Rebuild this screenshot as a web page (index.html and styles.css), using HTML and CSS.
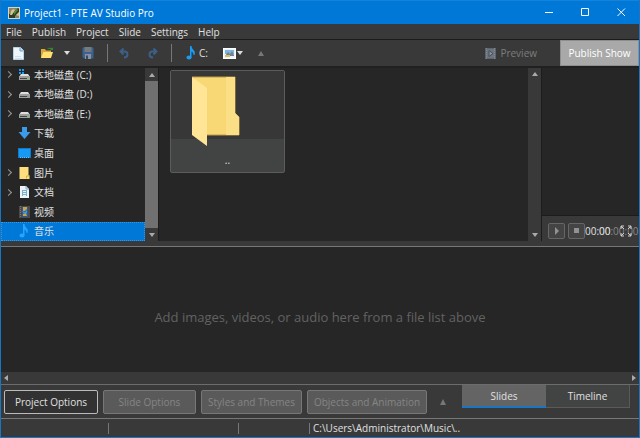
FILE: index.html
```html
<!DOCTYPE html>
<html lang="en">
  <head>
    <meta charset="UTF-8" />
    <meta name="viewport" content="width=device-width, initial-scale=1.0" />
    <title>Project1 - PTE AV Studio Pro</title>
    <link rel="stylesheet" href="styles.css">
  </head>
  <body>
    <header class="titlebar">
      <svg class="app-icon" width="12" height="12" viewBox="0 0 12 12">
        <rect width="12" height="12" fill="#d9d3c4" />
        <rect x="1" y="1" width="10" height="10" fill="#8d8569" />
        <path d="M1 11V7l4-1 5-5 1 1v3L7 9v2z" fill="#2f3d25" />
        <path d="M3 4l2-2 2 1-3 5H2zM8 8l3-3v4z" fill="#d3c38e" />
        <path d="M6 5l3-3 1 1-4 5z" fill="#4d8b37" />
      </svg>
      <span class="title">Project1 - PTE AV Studio Pro</span>
      <div class="window-buttons">
        <button type="button" aria-label="Minimize">
          <svg width="9" height="9" viewBox="0 0 9 9"><path d="M0 4.500h8" /></svg>
        </button>
        <button type="button" aria-label="Maximize">
          <svg width="9" height="9" viewBox="0 0 9 9"><path d="M.5.5h7v7h-7z" /></svg>
        </button>
        <button type="button" aria-label="Close">
          <svg width="9" height="9" viewBox="0 0 9 9"><path d="M.5.5l7.500 7.500M8 .5L.5 8" /></svg>
        </button>
      </div>
    </header>

    <nav class="menu">
      <button type="button">File</button>
      <button type="button">Publish</button>
      <button type="button">Project</button>
      <button type="button">Slide</button>
      <button type="button">Settings</button>
      <button type="button">Help</button>
    </nav>

    <div class="toolbar">
      <button type="button" class="tool tool-new" aria-label="New">
        <svg width="11" height="13" viewBox="0 0 11 13">
          <path d="M.5.500h7l3 3v9H.5z" fill="#eef6fc" stroke="#b9d3e6" />
          <path d="M7 .5v3.500h3.500" fill="#b7d8f0" stroke="#6ba5cf" />
          <path d="M2 9.500h6M2 11.500h7" stroke="#cfe0ec" />
        </svg>
      </button>
      <button type="button" class="tool tool-open" aria-label="Open">
        <svg width="14" height="12" viewBox="0 0 14 12">
          <path d="M1 11V2h4l1 1.500h5V6" fill="#d8a63a" />
          <path d="M1 11l2.500-6H13l-2 6z" fill="#ffdf72" />
          <path d="M7 2q2-2 4-1l2-.5V3h-3l1-1Q9 1.500 7 2z" fill="#2f8a2c" />
        </svg>
      </button>
      <button type="button" class="tool tool-drop" aria-label="Recent files">
        <span class="arrow arrow-down"></span>
      </button>
      <button type="button" class="tool tool-save" aria-label="Save">
        <svg width="12" height="12" viewBox="0 0 12 12">
          <path d="M.5.500h11v11H2L.5 10z" fill="#3b6291" />
          <path d="M2.500 0h7v5h-7z" fill="#747a80" />
          <path d="M3 7h6v5H3z" fill="#8c9298" />
          <path d="M4 8.500h2V12H4z" fill="#2d4d76" />
        </svg>
      </button>
      <span class="separator"></span>
      <button type="button" class="tool tool-undo" aria-label="Undo">
        <svg width="10" height="12" viewBox="0 0 10 12">
          <path d="M4.500 1.500L1.500 4.500l3 3M2 4.500h3.500Q8.500 4.500 8.500 7.500T5 10.500" fill="none" stroke="#3c5f88" stroke-width="2" />
        </svg>
      </button>
      <button type="button" class="tool tool-redo" aria-label="Redo">
        <svg width="10" height="12" viewBox="0 0 10 12">
          <path d="M5.500 1.500l3 3-3 3M8 4.500H4.500Q1.500 4.500 1.500 7.500T5 10.500" fill="none" stroke="#3c5f88" stroke-width="2" />
        </svg>
      </button>
      <span class="separator"></span>
      <button type="button" class="tool tool-drive">
        <svg width="10" height="14" viewBox="0 0 10 14">
          <ellipse cx="3" cy="11.500" rx="2.500" ry="2" fill="#1a9cf5" />
          <path d="M4 0h1.500q0 2.500 2 4t1 5h-1q0-3-2-3.500v6H4z" fill="#1a9cf5" />
        </svg>
        <span>C:</span>
      </button>
      <button type="button" class="tool tool-filter" aria-label="File types">
        <svg width="13" height="11" viewBox="0 0 13 11">
          <rect x=".5" y=".5" width="12" height="10" fill="#eaf4fb" stroke="#fff" />
          <path d="M2 2h9v4H2z" fill="#7db6e3" />
          <path d="M2 8l3-4 2 2 2-3 2 4v1z" fill="#77838c" />
          <path d="M2 7h5v2H2z" fill="#e0bd63" />
        </svg>
        <span class="arrow arrow-down"></span>
      </button>
      <button type="button" class="tool tool-up" aria-label="Up">
        <span class="arrow arrow-up"></span>
      </button>
      <button type="button" class="preview-button" disabled>
        <svg width="11" height="11" viewBox="0 0 11 11">
          <rect x=".5" y=".5" width="10" height="10" fill="#737373" stroke="#56667a" />
          <path d="M1.500 0v11M9.500 0v11" stroke="#878787" stroke-dasharray="1 1" />
          <path d="M4 2.500l4 3-4 3z" fill="#8e9297" stroke="#345274" />
        </svg>
        <span>Preview</span>
      </button>
      <button type="button" class="publish-button">Publish Show</button>
    </div>

    <main class="workspace">
      <section class="browser">
        <ul class="tree">
          <li>
            <span class="chevron"></span>
            <svg width="13" height="12" viewBox="0 0 13 12">
              <path d="M1 0h2v2H1zM4 0h2v2H4zM1 3h2v2H1zM4 3h2v2H4z" fill="#1a9cf5" />
              <path d="M3 5h7l2 3H1z" fill="#dedede" />
              <rect x="1" y="7" width="11" height="4" fill="#9e9e9e" />
              <path d="M2 9.500h9" stroke="#454545" /><path d="M9 9.500h2" stroke="#63d35c" />
            </svg>
            本地磁盘 (C:)
          </li>
          <li>
            <span class="chevron"></span>
            <svg width="13" height="12" viewBox="0 0 13 12">
              <path d="M3 4h7l2 3H1z" fill="#dedede" />
              <rect x="1" y="6" width="11" height="4" fill="#9e9e9e" />
              <path d="M2 8.500h9" stroke="#454545" /><path d="M9 8.500h2" stroke="#7aa877" />
            </svg>
            本地磁盘 (D:)
          </li>
          <li>
            <span class="chevron"></span>
            <svg width="13" height="12" viewBox="0 0 13 12">
              <path d="M3 4h7l2 3H1z" fill="#dedede" />
              <rect x="1" y="6" width="11" height="4" fill="#9e9e9e" />
              <path d="M2 8.500h9" stroke="#454545" /><path d="M9 8.500h2" stroke="#63d35c" />
            </svg>
            本地磁盘 (E:)
          </li>
          <li>
            <span class="chevron empty"></span>
            <svg width="13" height="12" viewBox="0 0 13 12">
              <path d="M4 0h5v5h3.500L6.500 12 .5 5H4z" fill="#3c9be8" />
            </svg>
            下载
          </li>
          <li>
            <span class="chevron empty"></span>
            <svg width="13" height="12" viewBox="0 0 13 12">
              <rect x=".5" y="1.500" width="12" height="9" fill="#1499f5" stroke="#1279ca" />
              <path d="M2 10.500h9" stroke="#71bdf0" stroke-dasharray="1 1" />
            </svg>
            桌面
          </li>
          <li>
            <span class="chevron"></span>
            <svg width="13" height="12" viewBox="0 0 13 12">
              <path d="M1.500 0h9v8.500h1V12h-10z" fill="#fddf7d" />
              <path d="M8.500 11.500V9h3" fill="none" stroke="#d9ae44" />
            </svg>
            图片
          </li>
          <li>
            <span class="chevron"></span>
            <svg width="13" height="12" viewBox="0 0 13 12">
              <path d="M2 0h6l3 3v9H2z" fill="#edf4f8" />
              <path d="M8 0v3h3M4 4.500h5M4 6.500h5M4 8.500h5M4.500 5v5M8.500 5v5" fill="none" stroke="#7badcc" />
            </svg>
            文档
          </li>
          <li>
            <span class="chevron empty"></span>
            <svg width="13" height="12" viewBox="0 0 13 12">
              <rect x="1" width="11" height="12" fill="#4b4b4b" />
              <rect x="4" y="1" width="6" height="10" fill="#295d91" />
              <path d="M5 1h4v2L7 5H5zM5 8l3-1 1 3H5z" fill="#cf9f4c" />
              <path d="M4 5l3 1 2-2v3L6 8z" fill="#3c9be8" />
              <path d="M2.500 0v12" stroke="#777" stroke-dasharray="1 1" />
            </svg>
            视频
          </li>
          <li class="selected">
            <span class="chevron empty"></span>
            <svg width="13" height="14" viewBox="0 0 13 14">
              <ellipse cx="4" cy="11.500" rx="2.500" ry="2" fill="#24a7fb" />
              <path d="M5 0h1.500q0 2.500 2 4t1 5h-1q0-3-2-3.500v6H5z" fill="#24a7fb" />
            </svg>
            音乐
          </li>
        </ul>
        <div class="scrollbar with-thumb">
          <button type="button" aria-label="Scroll up"><span class="arrow arrow-up"></span></button>
          <span class="thumb"></span>
          <button type="button" aria-label="Scroll down"><span class="arrow arrow-down"></span></button>
        </div>
      </section>

      <section class="files">
        <div class="file-list">
          <figure class="file">
            <div class="file-thumb">
              <svg width="48" height="72" viewBox="0 0 48 72">
                <path d="M0 1h43v36l4 4v18H14V15z" fill="#f8d775" stroke="#bd9c4d" />
                <path d="M34 1h9v36l4 4v18H34z" fill="#fbdf87" />
                <path d="M0 1l15 11v58L0 59z" fill="#ffe595" />
              </svg>
            </div>
            <figcaption>..</figcaption>
          </figure>
        </div>
        <div class="scrollbar">
          <button type="button" aria-label="Scroll up"><span class="arrow arrow-up"></span></button>
          <button type="button" aria-label="Scroll down"><span class="arrow arrow-down"></span></button>
        </div>
      </section>

      <section class="player">
        <div class="screen"></div>
        <div class="controls">
          <button type="button" class="play" aria-label="Play">
            <svg width="6" height="8" viewBox="0 0 6 8"><path d="M1 0l4 4-4 4z" fill="#929292" /></svg>
          </button>
          <button type="button" class="stop" aria-label="Stop">
            <svg width="5" height="5" viewBox="0 0 5 5"><path d="M0 0h5v5H0z" fill="#929292" /></svg>
          </button>
          <div class="time">
            <span class="elapsed">00:00</span>
            <span class="total">00:00:00</span>
            <button type="button" class="fullscreen" aria-label="Full screen">
              <svg width="12" height="12" viewBox="0 0 12 12">
                <path d="M1 4V1h3M8 1h3v3M11 8v3H8M4 11H1V8M1 1l3 3M11 1L8 4M11 11L8 8M1 11l3-3" fill="none" stroke="#d0d0d0" />
              </svg>
            </button>
          </div>
        </div>
      </section>
    </main>

    <section class="slides">
      <p>Add images, videos, or audio here from a file list above</p>
    </section>
    <div class="slides-scroll">
      <button type="button" aria-label="Scroll left"><span class="arrow arrow-left"></span></button>
      <button type="button" aria-label="Scroll right"><span class="arrow arrow-right"></span></button>
    </div>

    <div class="options">
      <button type="button" class="option project-options">Project Options</button>
      <button type="button" class="option slide-options" disabled>Slide Options</button>
      <button type="button" class="option styles-themes" disabled>Styles and Themes</button>
      <button type="button" class="option objects" disabled>Objects and Animation</button>
      <button type="button" class="more" aria-label="More"><span class="arrow arrow-up"></span></button>
      <div class="tabs">
        <button type="button" class="active">Slides</button>
        <button type="button">Timeline</button>
      </div>
    </div>

    <footer class="status">
      <span class="cell cell-first"></span>
      <span class="cell"></span>
      <span class="cell cell-last"></span>
      <span class="path">C:\Users\Administrator\Music\..</span>
    </footer>
  </body>
</html>
```
FILE: styles.css
```css
* {
  box-sizing: border-box;
}
body {
  margin: 0;
  height: 100vh;
  display: flex;
  flex-direction: column;
  overflow: hidden;
  border: 1px solid #1976c5;
  border-top: none;
  background-color: #393939;
  color: #e0e0e0;
  font-family: "Open Sans", "Noto Sans CJK SC", sans-serif;
  font-size: 10px;
  line-height: 14px;
}
button {
  display: flex;
  align-items: center;
  justify-content: center;
  margin: 0;
  padding: 0;
  border: none;
  background: none;
  color: inherit;
  font: inherit;
  white-space: nowrap;
}
svg {
  display: block;
  flex-shrink: 0;
}

/* title and menu */
.titlebar {
  display: flex;
  align-items: center;
  height: 24px;
  flex-shrink: 0;
  padding-left: 7px;
  background-color: #0078d7;
  border-top: 1px solid #1683da;
  color: #fff;
}
.title {
  margin-left: 4px;
}
.window-buttons {
  display: flex;
  margin-left: auto;
}
.window-buttons button {
  width: 36px;
  height: 23px;
}
.window-buttons path {
  fill: none;
  stroke: #fff;
}
.menu {
  display: flex;
  gap: 10px;
  height: 15px;
  flex-shrink: 0;
  padding-left: 5px;
}

/* toolbar */
.toolbar {
  display: flex;
  align-items: center;
  height: 29px;
  flex-shrink: 0;
  padding-left: 12px;
  border-top: 1px solid #1c1c1c;
  border-bottom: 2px solid #202020;
}
.tool {
  height: 22px;
}
.tool-open {
  margin-left: 16px;
}
.tool-drop {
  margin-left: 10px;
}
.tool-save {
  margin-left: 12px;
}
.separator {
  width: 1px;
  height: 18px;
  margin-left: 13px;
  background-color: #777;
}
.tool-undo {
  margin-left: 11px;
}
.tool-redo {
  margin-left: 19px;
}
.tool-drive {
  gap: 3px;
  margin-left: 14px;
}
.tool-filter {
  gap: 1px;
  margin-left: 15px;
}
.tool-up {
  margin-left: 15px;
}
.tool-up .arrow-up {
  border-bottom: 5px solid #777;
}
.preview-button {
  gap: 4px;
  margin-left: auto;
  color: #7d7d7d;
}
.publish-button {
  width: 79px;
  height: 26px;
  margin-left: 23px;
  border: 1px solid #8e8e8e;
  background-color: #a9a9a9;
  color: #fff;
}
.arrow {
  border: 3px solid transparent;
}
.arrow-down {
  border-top: 4px solid #ddd;
  border-bottom: none;
}
.arrow-up {
  border-bottom: 4px solid #aaa;
  border-top: none;
}
.arrow-left {
  border-right: 4px solid #aaa;
  border-left: none;
}
.arrow-right {
  border-left: 4px solid #aaa;
  border-right: none;
}

/* folders, files, player */
.workspace {
  display: flex;
  height: 173px;
  flex-shrink: 0;
  background-color: #262626;
}
.browser {
  display: flex;
  width: 158px;
  border-right: 1px solid #1c1c1c;
}
.tree {
  display: flex;
  flex-direction: column;
  flex: 1;
  margin: -3px 0 0;
  padding: 0;
  list-style: none;
}
.tree li {
  display: flex;
  flex: 1;
  align-items: center;
  gap: 3px;
  padding-left: 5px;
  min-height: 0;
}
.tree svg {
  margin-left: 3px;
}
.chevron {
  width: 5px;
  height: 5px;
  margin-right: 1px;
  border: solid #999;
  border-width: 1px 1px 0 0;
  transform: rotate(45deg);
}
.empty {
  visibility: hidden;
}
.tree .selected {
  background-color: #0078d7;
  outline: 1px dotted #3a97dd;
  outline-offset: -1px;
}
.scrollbar {
  display: flex;
  flex-direction: column;
  justify-content: space-between;
  width: 13px;
  background-color: #393939;
}
.scrollbar button {
  height: 12px;
}
.scrollbar .arrow-down {
  border-top-color: #aaa;
}
.with-thumb button {
  height: 13px;
}
.thumb {
  flex: 1;
  background-color: #707070;
}
.files {
  display: flex;
  flex: 1;
}
.file-list {
  flex: 1;
  padding: 2px 11px;
}
.file {
  width: 115px;
  margin: 0;
  border: 1px solid #5c5c5c;
  border-radius: 2px;
  background-color: #424443;
}
.file-thumb {
  display: flex;
  height: 68px;
  padding: 5px 0 0 21px;
  background-color: #373737;
}
.file figcaption {
  height: 33px;
  padding-top: 14px;
  text-align: center;
}
.player {
  display: flex;
  flex-direction: column;
  width: 98px;
  border-left: 1px solid #1c1c1c;
}
.screen {
  flex: 1;
}
.controls {
  display: flex;
  align-items: center;
  height: 26px;
  padding: 4px 0 0 6px;
  border-top: 1px solid #1c1c1c;
  background-color: #393939;
}
.play,
.stop {
  width: 17px;
  height: 16px;
  border: 1px solid #666;
  border-radius: 2px;
  background-color: #444;
}
.stop {
  margin-left: 3px;
}
/* elapsed time sits over the total in a narrow player */
.time {
  position: relative;
  flex: 1;
  height: 14px;
  overflow: hidden;
}
.elapsed,
.total,
.fullscreen {
  position: absolute;
  top: 0;
}
.elapsed {
  left: 0;
  z-index: 1;
}
.total {
  left: 14px;
  color: #888;
}
.fullscreen {
  right: 7px;
  height: 14px;
}

/* slide list */
.slides {
  display: flex;
  align-items: center;
  justify-content: center;
  flex: 1;
  border-top: 1px solid #777;
  margin-top: 5px;
  background-color: #262626;
  color: #626262;
  font-size: 13px;
  line-height: 18px;
}
.slides p {
  margin: 14px 0 0;
}
.slides-scroll {
  display: flex;
  justify-content: space-between;
  height: 12px;
  flex-shrink: 0;
  padding: 0 3px;
}

/* bottom bars */
.options {
  display: flex;
  align-items: center;
  gap: 5px;
  height: 34px;
  flex-shrink: 0;
  padding: 0 9px 0 3px;
  border-top: 1px solid #6c6c6c;
}
.option {
  height: 24px;
  border: 1px solid #777;
  border-radius: 2px;
  background-color: #5a5a5a;
  color: #858585;
}
.project-options {
  width: 94px;
  border-color: #bbb;
  background-color: #323232;
  color: #e0e0e0;
}
.slide-options {
  width: 93px;
}
.styles-themes {
  width: 101px;
}
.objects {
  width: 120px;
}
.more {
  margin-left: 8px;
}
.more .arrow {
  border-bottom: 6px solid #777;
}
.tabs {
  display: flex;
  align-self: flex-start;
  margin-left: auto;
}
.tabs button {
  width: 84px;
  height: 23px;
  border: solid #5a5a5a;
  border-width: 0 1px 1px 0;
  background-color: #424443;
}
.tabs .active {
  border: none;
  border-bottom: 2px solid #1976c5;
  background-color: #646464;
}
.status {
  display: flex;
  align-items: center;
  height: 19px;
  flex-shrink: 0;
  border-top: 1px solid #777;
}
.cell {
  width: 130px;
  height: 11px;
  border-right: 1px solid #777;
}
.cell-first {
  width: 108px;
}
.cell-last {
  width: 71px;
}
.path {
  margin-left: 3px;
}
```
